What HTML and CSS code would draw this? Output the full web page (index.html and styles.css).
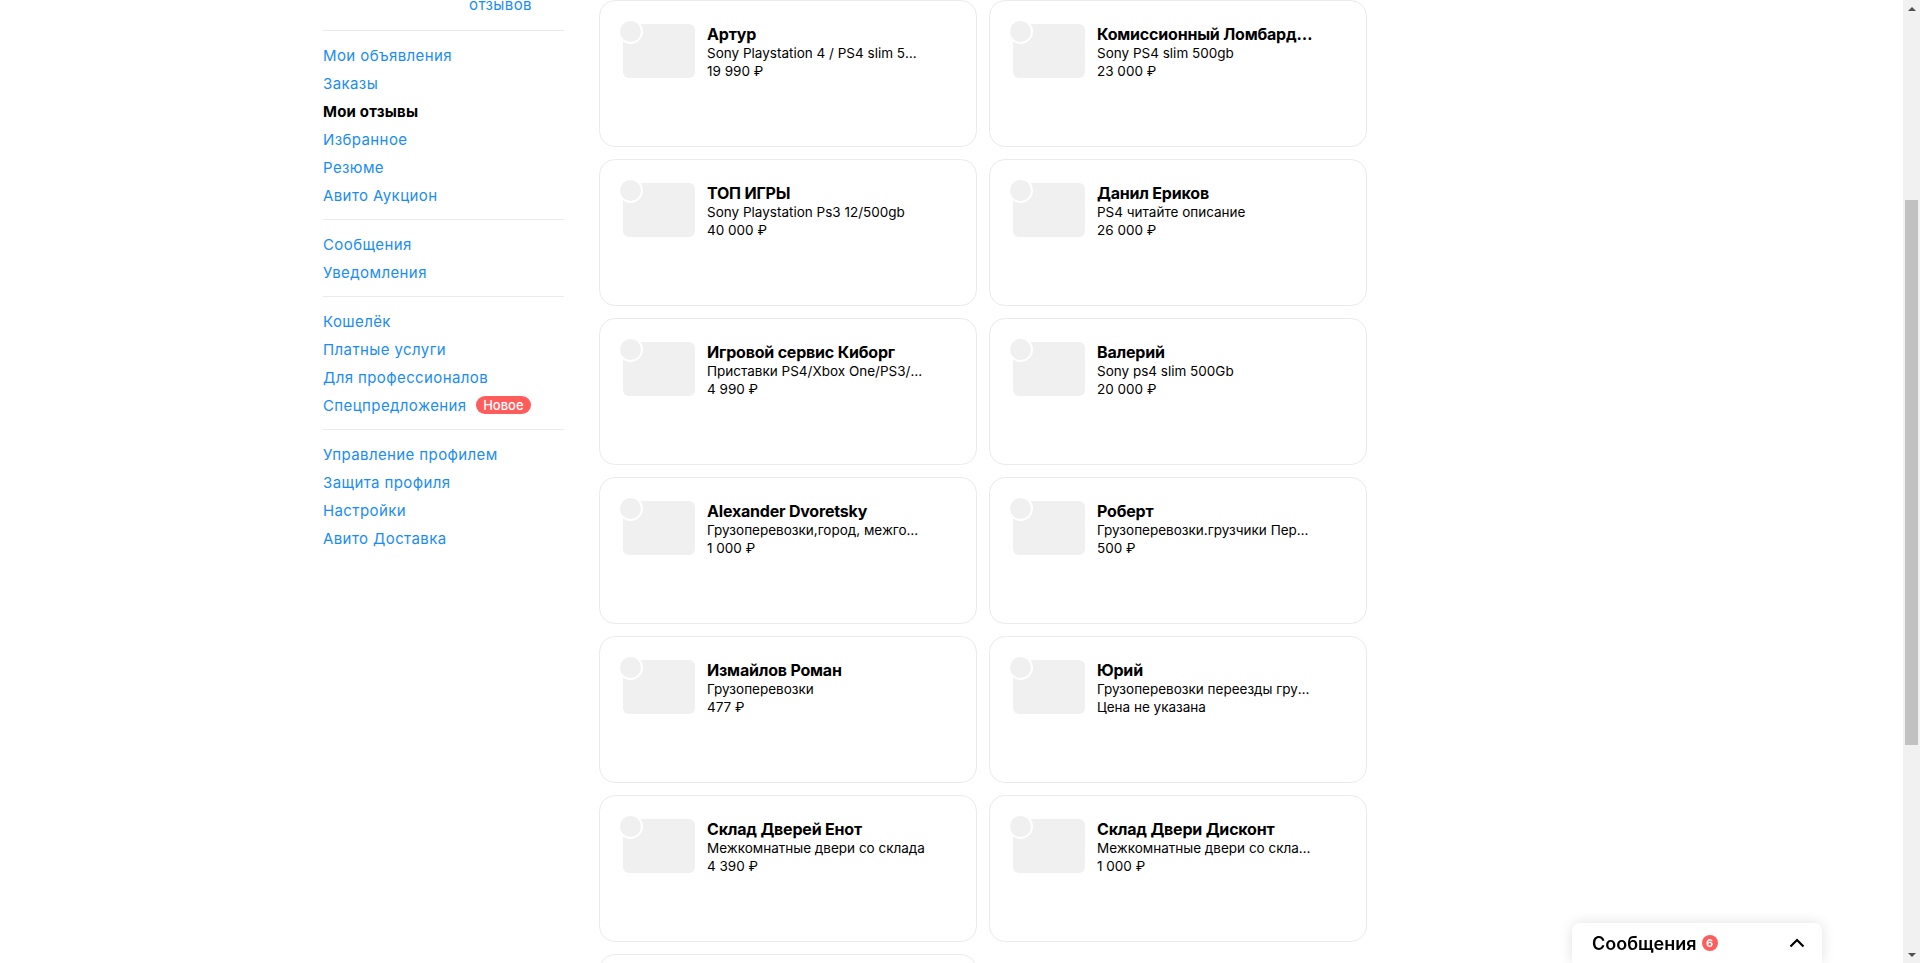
FILE: index.html
```html
<!DOCTYPE html>
<html lang="ru">
<head>
    <meta charset="UTF-8">
    <title>Мои отзывы — Авито</title>
    <link rel="stylesheet" href="styles.css">
</head>
<body>
    <header class="topbar">
        <div class="topbar-inner">
            <a href="#" class="brand">Авито</a>
            <div class="search">Поиск по объявлениям</div>
            <a href="#" class="post-btn">Разместить объявление</a>
        </div>
    </header>

    <div class="page">
        <aside class="sidebar">
            <div class="profile">
                <div class="profile-avatar"></div>
                <div class="profile-name">Николай</div>
                <div class="profile-since">На Авито с марта 2015</div>
                <div class="profile-rating">
                    <div class="rating-left">
                        <span class="rating-value">4,9</span>
                        <span class="stars">★★★★★</span>
                    </div>
                    <a href="#" class="rating-link">17 отзывов</a>
                </div>
            </div>

            <nav class="menu">
                <div class="menu-group">
                    <a href="#">Мои объявления</a>
                    <a href="#">Заказы</a>
                    <a href="#" class="active">Мои отзывы</a>
                    <a href="#">Избранное</a>
                    <a href="#">Резюме</a>
                    <a href="#">Авито Аукцион</a>
                </div>
                <div class="menu-group">
                    <a href="#">Сообщения</a>
                    <a href="#">Уведомления</a>
                </div>
                <div class="menu-group">
                    <a href="#">Кошелёк</a>
                    <a href="#">Платные услуги</a>
                    <a href="#">Для профессионалов</a>
                    <a href="#">Спецпредложения <span class="tag-new">Новое</span></a>
                </div>
                <div class="menu-group">
                    <a href="#">Управление профилем</a>
                    <a href="#">Защита профиля</a>
                    <a href="#">Настройки</a>
                    <a href="#">Авито Доставка</a>
                </div>
            </nav>
        </aside>

        <main class="content">
            <h1>Мои отзывы</h1>
            <div class="tabs">
                <a href="#" class="tab tab-active">Ожидают оценки</a>
                <a href="#" class="tab">Оставленные</a>
                <a href="#" class="tab">Обо мне</a>
            </div>
            <h2 class="section-title">Оцените продавцов, у которых вы покупали</h2>
            <p class="section-hint">Ваш отзыв поможет другим покупателям сделать выбор</p>

            <div class="reviews-grid">
                <div class="deal-card">
                    <div class="thumb"></div>
                    <div class="deal-info">
                        <div class="seller">Артур</div>
                        <div class="item">Sony Playstation 4 / PS4 slim 500gb</div>
                        <div class="price">19 990 ₽</div>
                    </div>
                </div>
                <div class="deal-card">
                    <div class="thumb"></div>
                    <div class="deal-info">
                        <div class="seller">Комиссионный Ломбардинвест</div>
                        <div class="item">Sony PS4 slim 500gb</div>
                        <div class="price">23 000 ₽</div>
                    </div>
                </div>
                <div class="deal-card">
                    <div class="thumb"></div>
                    <div class="deal-info">
                        <div class="seller">ТОП ИГРЫ</div>
                        <div class="item">Sony Playstation Ps3 12/500gb</div>
                        <div class="price">40 000 ₽</div>
                    </div>
                </div>
                <div class="deal-card">
                    <div class="thumb"></div>
                    <div class="deal-info">
                        <div class="seller">Данил Ериков</div>
                        <div class="item">PS4 читайте описание</div>
                        <div class="price">26 000 ₽</div>
                    </div>
                </div>
                <div class="deal-card">
                    <div class="thumb"></div>
                    <div class="deal-info">
                        <div class="seller">Игровой сервис Киборг</div>
                        <div class="item">Приставки PS4/Xbox One/PS3/Xbox 360</div>
                        <div class="price">4 990 ₽</div>
                    </div>
                </div>
                <div class="deal-card">
                    <div class="thumb"></div>
                    <div class="deal-info">
                        <div class="seller">Валерий</div>
                        <div class="item">Sony ps4 slim 500Gb</div>
                        <div class="price">20 000 ₽</div>
                    </div>
                </div>
                <div class="deal-card">
                    <div class="thumb"></div>
                    <div class="deal-info">
                        <div class="seller">Alexander Dvoretsky</div>
                        <div class="item">Грузоперевозки,город, межгород</div>
                        <div class="price">1 000 ₽</div>
                    </div>
                </div>
                <div class="deal-card">
                    <div class="thumb"></div>
                    <div class="deal-info">
                        <div class="seller">Роберт</div>
                        <div class="item">Грузоперевозки.грузчики Пермь и край</div>
                        <div class="price">500 ₽</div>
                    </div>
                </div>
                <div class="deal-card">
                    <div class="thumb"></div>
                    <div class="deal-info">
                        <div class="seller">Измайлов Роман</div>
                        <div class="item">Грузоперевозки</div>
                        <div class="price">477 ₽</div>
                    </div>
                </div>
                <div class="deal-card">
                    <div class="thumb"></div>
                    <div class="deal-info">
                        <div class="seller">Юрий</div>
                        <div class="item">Грузоперевозки переезды грузчики</div>
                        <div class="price">Цена не указана</div>
                    </div>
                </div>
                <div class="deal-card">
                    <div class="thumb"></div>
                    <div class="deal-info">
                        <div class="seller">Склад Дверей Енот</div>
                        <div class="item">Межкомнатные двери со склада</div>
                        <div class="price">4 390 ₽</div>
                    </div>
                </div>
                <div class="deal-card">
                    <div class="thumb"></div>
                    <div class="deal-info">
                        <div class="seller">Склад Двери Дисконт</div>
                        <div class="item">Межкомнатные двери со склада в наличии</div>
                        <div class="price">1 000 ₽</div>
                    </div>
                </div>
                <div class="deal-card">
                    <div class="thumb"></div>
                    <div class="deal-info">
                        <div class="seller">Михаил</div>
                        <div class="item">Кухонный гарнитур</div>
                        <div class="price">15 000 ₽</div>
                    </div>
                </div>
            </div>
        </main>
    </div>

    <footer class="footer">
        <div class="footer-inner">
            <a href="#">Помощь</a>
            <a href="#">Безопасность</a>
            <a href="#">Реклама на сайте</a>
            <a href="#">О компании</a>
            <a href="#">Вакансии</a>
        </div>
    </footer>

    <div class="messenger">
        <span class="messenger-title">Сообщения</span>
        <span class="messenger-count">6</span>
        <svg class="messenger-toggle" width="16" height="10" viewBox="0 0 16 10">
            <polyline points="1.5,8.5 8,2 14.5,8.5" fill="none" stroke="#000" stroke-width="2.2" />
        </svg>
    </div>

    <!-- полоса прокрутки окна -->
    <div class="scrollbar" aria-hidden="true">
        <div class="scroll-btn"><span class="arrow-up"></span></div>
        <div class="scroll-track"><div class="scroll-thumb"></div></div>
        <div class="scroll-btn"><span class="arrow-down"></span></div>
    </div>

    <script src="script.js"></script>
</body>
</html>
```

FILE: styles.css
```css
:root {
    --link: #1a8cf5;
    --text: #000000;
    --line: #ebebeb;
    --placeholder: #f0f0f0;
    --red: #ff5c5c;
}

* {
    box-sizing: border-box;
}

body {
    margin: 0;
    padding-right: 17px;
    font-family: Inter, "Noto Sans", sans-serif;
    color: var(--text);
    background-color: #ffffff;
}

a {
    color: var(--link);
    text-decoration: none;
}

/* шапка */
.topbar {
    height: 72px;
    border-bottom: 1px solid var(--line);
}

.topbar-inner {
    width: 1257px;
    margin: 0 auto;
    height: 100%;
    display: flex;
    align-items: center;
    gap: 24px;
}

.brand {
    font-size: 26px;
    font-weight: 700;
    color: #000;
}

.search {
    flex: 1;
    height: 40px;
    line-height: 40px;
    padding: 0 16px;
    border-radius: 10px;
    background-color: #f2f1f0;
    color: #8f8f8f;
    font-size: 15px;
}

.post-btn {
    height: 40px;
    line-height: 40px;
    padding: 0 18px;
    border-radius: 10px;
    background-color: #00aaff;
    color: #fff;
    font-size: 15px;
}

.page {
    width: 1257px;
    margin: 0 auto;
    padding-top: 24px;
    display: flex;
    align-items: flex-start;
    gap: 35px;
}

/* левая колонка */
.sidebar {
    width: 241px;
    flex-shrink: 0;
}

.profile {
    padding-bottom: 15px;
}

.profile-avatar {
    width: 112px;
    height: 112px;
    border-radius: 50%;
    background-color: var(--placeholder);
    margin-bottom: 16px;
}

.profile-name {
    font-size: 22px;
    font-weight: 700;
    line-height: 28px;
}

.profile-since {
    margin-top: 4px;
    font-size: 15px;
    line-height: 20px;
    color: #757575;
}

.profile-rating {
    margin-top: 24px;
    display: grid;
    grid-template-columns: 146px 72px;
    align-items: start;
    font-size: 15px;
    line-height: 20px;
    letter-spacing: 0.4px;
}

.rating-value {
    font-weight: 700;
    margin-right: 4px;
}

.stars {
    color: #ffb021;
    font-size: 15px;
    letter-spacing: 1px;
}

.menu-group {
    border-top: 1px solid var(--line);
    padding: 11px 0 9px;
}

.menu-group a {
    display: block;
    font-size: 15px;
    line-height: 28px;
    letter-spacing: 0.4px;
}

.menu-group a.active {
    color: var(--text);
    font-weight: 700;
    letter-spacing: 0.2px;
}

.tag-new {
    display: inline-block;
    vertical-align: 1px;
    margin-left: 5px;
    padding: 0 7px;
    height: 18px;
    line-height: 18px;
    border-radius: 9px;
    background-color: var(--red);
    color: #fff;
    font-size: 13px;
    font-weight: 500;
    letter-spacing: 0;
}

/* основная колонка */
.content {
    width: 768px;
}

h1 {
    margin: 0;
    font-size: 32px;
    line-height: 40px;
}

.tabs {
    margin-top: 20px;
    height: 48px;
    display: flex;
    gap: 28px;
    border-bottom: 1px solid var(--line);
}

.tab {
    line-height: 46px;
    font-size: 16px;
    color: #000;
}

.tab-active {
    border-bottom: 2px solid #000;
    font-weight: 600;
}

.section-title {
    margin: 36px 0 0;
    font-size: 20px;
    line-height: 28px;
}

.section-hint {
    margin: 4px 0 33px;
    font-size: 15px;
    line-height: 20px;
    color: #757575;
}

.reviews-grid {
    display: grid;
    grid-template-columns: 378px 378px;
    gap: 12px;
}

.deal-card {
    height: 147px;
    padding: 23px;
    border: 1px solid var(--line);
    border-radius: 16px;
    display: flex;
    align-items: flex-start;
}

.thumb {
    position: relative;
    width: 72px;
    height: 54px;
    flex-shrink: 0;
    border-radius: 6px;
    background-color: var(--placeholder);
}

/* кружок продавца поверх фото */
.thumb::before {
    content: "";
    position: absolute;
    left: -5px;
    top: -5px;
    width: 21px;
    height: 21px;
    border-radius: 50%;
    border: 2px solid #fff;
    background-color: var(--placeholder);
}

.deal-info {
    width: 218px;
    margin-left: 12px;
}

.deal-info div {
    white-space: nowrap;
    overflow: hidden;
    text-overflow: ellipsis;
}

.seller {
    font-size: 16px;
    font-weight: 700;
    line-height: 20px;
    letter-spacing: -0.2px;
}

.item,
.price {
    font-size: 13.5px;
    line-height: 18px;
}

.footer {
    margin-top: 40px;
    height: 175px;
    background-color: #f7f7f7;
}

.footer-inner {
    width: 1257px;
    margin: 0 auto;
    padding-top: 32px;
    display: flex;
    gap: 24px;
    font-size: 14px;
}

.footer-inner a {
    color: #757575;
}

/* плашка мессенджера */
.messenger {
    position: fixed;
    right: 98px;
    bottom: 0;
    width: 250px;
    height: 40px;
    padding: 0 17px 0 20px;
    display: flex;
    align-items: center;
    background-color: #fff;
    border-radius: 8px 8px 0 0;
    box-shadow: 0 0 14px rgba(0, 0, 0, 0.12);
}

.messenger-title {
    font-size: 18px;
    font-weight: 600;
}

.messenger-count {
    margin-left: 5px;
    width: 16px;
    height: 16px;
    border-radius: 50%;
    background-color: var(--red);
    color: #fff;
    font-size: 11px;
    font-weight: 700;
    line-height: 16px;
    text-align: center;
}

.messenger-toggle {
    margin-left: auto;
}

/* классическая полоса прокрутки */
.scrollbar {
    position: fixed;
    top: 0;
    right: 0;
    bottom: 0;
    width: 17px;
    display: flex;
    flex-direction: column;
    background-color: #f1f1f1;
}

.scroll-btn {
    height: 17px;
    display: flex;
    align-items: center;
    justify-content: center;
}

.arrow-up,
.arrow-down {
    width: 0;
    height: 0;
    border-left: 4px solid transparent;
    border-right: 4px solid transparent;
}

.arrow-up {
    border-bottom: 4px solid #505050;
}

.arrow-down {
    border-top: 4px solid #505050;
}

.scroll-track {
    position: relative;
    flex: 1;
}

.scroll-thumb {
    position: absolute;
    top: 183px;
    left: 2px;
    right: 2px;
    height: 545px;
    background-color: #c1c1c1;
}
```

FILE: script.js
```js
// открываем страницу сразу на списке сделок
const grid = document.querySelector(".reviews-grid");
window.scrollTo(0, grid.getBoundingClientRect().top + window.scrollY);
```
